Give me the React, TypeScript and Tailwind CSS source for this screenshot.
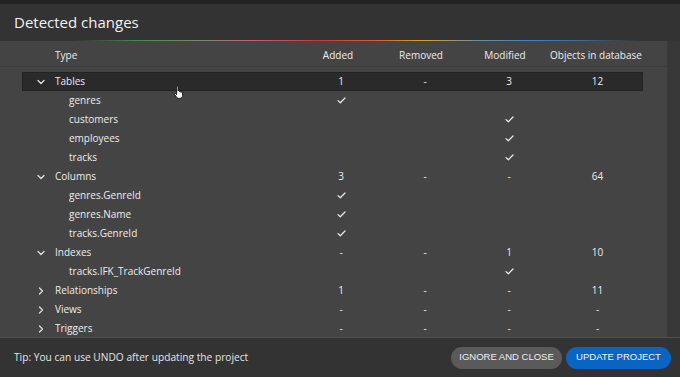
import React from "react";

type Row = {
  label: string;
  level: 0 | 1;
  expanded?: boolean;
  added?: string;
  removed?: string;
  modified?: string;
  objects?: string;
  highlight?: boolean;
};

const CHECK = "__check__";

const rows: Row[] = [
  { label: "Tables", level: 0, expanded: true, added: "1", removed: "-", modified: "3", objects: "12", highlight: true },
  { label: "genres", level: 1, added: CHECK },
  { label: "customers", level: 1, modified: CHECK },
  { label: "employees", level: 1, modified: CHECK },
  { label: "tracks", level: 1, modified: CHECK },
  { label: "Columns", level: 0, expanded: true, added: "3", removed: "-", modified: "-", objects: "64" },
  { label: "genres.GenreId", level: 1, added: CHECK },
  { label: "genres.Name", level: 1, added: CHECK },
  { label: "tracks.GenreId", level: 1, added: CHECK },
  { label: "Indexes", level: 0, expanded: true, added: "-", removed: "-", modified: "1", objects: "10" },
  { label: "tracks.IFK_TrackGenreId", level: 1, modified: CHECK },
  { label: "Relationships", level: 0, expanded: false, added: "1", removed: "-", modified: "-", objects: "11" },
  { label: "Views", level: 0, expanded: false, added: "-", removed: "-", modified: "-", objects: "-" },
  { label: "Triggers", level: 0, expanded: false, added: "-", removed: "-", modified: "-", objects: "-" },
];

function Check() {
  return (
    <svg width="9" height="7" viewBox="0 0 9 7" fill="none">
      <path d="M1 3.6L3.3 5.8L8 1" stroke="#e8e8e8" strokeWidth="1.3" strokeLinecap="round" strokeLinejoin="round" />
    </svg>
  );
}

function Chevron({ down }: { down: boolean }) {
  return down ? (
    <svg width="8" height="6" viewBox="0 0 8 6" fill="none">
      <path d="M1 1.5L4 4.5L7 1.5" stroke="#e0e0e0" strokeWidth="1.3" strokeLinecap="round" strokeLinejoin="round" />
    </svg>
  ) : (
    <svg width="6" height="8" viewBox="0 0 6 8" fill="none">
      <path d="M1.5 1L4.5 4L1.5 7" stroke="#e0e0e0" strokeWidth="1.3" strokeLinecap="round" strokeLinejoin="round" />
    </svg>
  );
}

function Cell({ v }: { v?: string }) {
  return (
    <div className="flex items-center justify-center">
      {v === CHECK ? <Check /> : v ? <span>{v}</span> : null}
    </div>
  );
}

const grid = "grid grid-cols-[276px_84px_84px_84px_93px]";

export default function App() {
  return (
    <div
      className="w-[680px] h-[377px] flex flex-col bg-[#333333] text-[#ededed] overflow-hidden relative"
      style={{ fontFamily: '"Open Sans", "Noto Sans", sans-serif' }}
    >
      {/* Title */}
      <div className="h-[40px] shrink-0 flex items-center pl-[14px] bg-[#333333] border-t-[4px] border-[#242424]">
        <span className="text-[15px] leading-none text-[#f2f2f2] font-medium">Detected changes</span>
      </div>
      <div className="h-[1px] shrink-0 bg-[linear-gradient(90deg,transparent_0%,transparent_11%,#3f8f4a_20%,#7a8a6a_30%,#c4607a_37%,#d23434_47%,#e0602a_56%,#d8a028_62%,#6f8f9a_70%,#3a82c8_78%,#3a6a9a_86%,transparent_94%)]" />

      {/* Body */}
      <div className="flex-1 flex min-h-0 bg-[#444444]">
        <div className="flex-1 flex flex-col min-w-0 text-[10px] font-medium">
          <div className="h-[26px] shrink-0 flex items-center border-b border-[#3c3c3c] pl-[22px] pt-[3px] whitespace-nowrap">
            <div className={grid + " w-full"}>
              <div className="pl-[33px]">Type</div>
              <div className="text-center pr-[4px]">Added</div>
              <div className="text-center pr-[6px]">Removed</div>
              <div className="text-center pr-[6px]">Modified</div>
              <div className="text-center pr-[14px]">Objects in database</div>
            </div>
          </div>
          <div className="flex flex-col pt-[5px] pl-[22px] pr-[24px] whitespace-nowrap">
            {rows.map((r, i) => (
              <div
                key={i}
                className={
                  grid +
                  " h-[19px] items-center " +
                  (r.highlight ? "bg-[#2a2a2a] border border-[#232323]" : "border border-transparent")
                }
              >
                <div className="flex items-center">
                  {r.level === 0 ? (
                    <>
                      <div className="w-[32px] flex justify-center pl-[3px]">
                        <Chevron down={!!r.expanded} />
                      </div>
                      <span>{r.label}</span>
                    </>
                  ) : (
                    <span className="pl-[46px]">{r.label}</span>
                  )}
                </div>
                <Cell v={r.added} />
                <Cell v={r.removed} />
                <Cell v={r.modified} />
                <Cell v={r.objects} />
              </div>
            ))}
          </div>
        </div>
        <div className="w-[13px] shrink-0 bg-[#383838] border-l border-[#3a3a3a]" />
      </div>

      {/* Footer */}
      <div className="h-[40px] shrink-0 flex items-center justify-between pl-[14px] pr-[9px] bg-[#333333] border-t border-[#505050]">
        <span className="text-[10.2px] font-medium text-[#e6e6e6]">Tip: You can use UNDO after updating the project</span>
        <div className="flex items-center gap-[4px]" style={{ fontFamily: '"Liberation Sans", Arial, sans-serif' }}>
          <button className="h-[22px] w-[111px] rounded-full bg-[#5a5a5a] text-[9.5px] text-[#f0f0f0]">IGNORE AND CLOSE</button>
          <button className="h-[22px] w-[105px] rounded-full bg-[#0a64c4] text-[9.5px] text-[#f4f4f4]">UPDATE PROJECT</button>
        </div>
      </div>

      {/* mouse cursor */}
      <svg className="absolute left-[173px] top-[85px]" width="11" height="15" viewBox="0 0 15 19">
        <path
          d="M5 1.5a1 1 0 0 1 2 0V7.5a1 1 0 0 1 2 0V8.5a1 1 0 0 1 2 0V9.5a1 1 0 0 1 2 0V13.5c0 2.2-1.5 4-3.5 4H7.5c-1.2 0-2-0.6-2.7-1.6L2 11.8c-0.6-0.9 0.6-1.8 1.3-1L5 12.5Z"
          fill="#ffffff"
          stroke="#000000"
          strokeWidth="1.1"
          strokeLinejoin="round"
        />
      </svg>
    </div>
  );
}
